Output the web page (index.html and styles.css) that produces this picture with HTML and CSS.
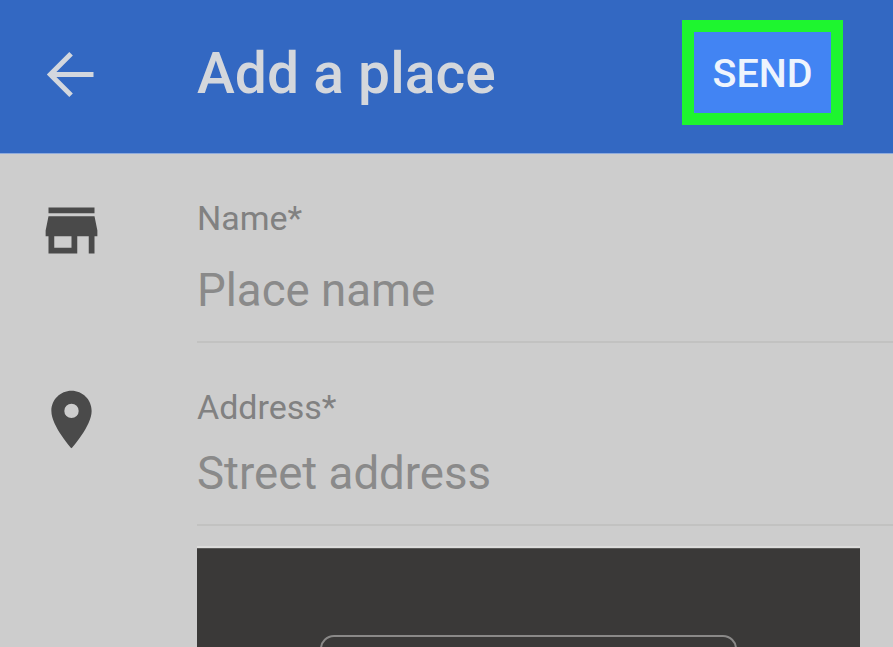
FILE: index.html
```html
<!DOCTYPE html>
<html lang="en">
<head>
<meta charset="utf-8">
<title>Add a place</title>
<link rel="stylesheet" href="styles.css">
</head>
<body>
<div class="page">
  <header class="appbar">
    <div class="appbar-left">
      <svg class="icon icon-back" viewBox="0 0 24 24"><path d="M20 12H5M12.200 4.800L5 12l7.200 7.200"/></svg>
    </div>
    <h1 class="title">Add a place</h1>
    <div class="send-frame"><button class="send">SEND</button></div>
  </header>
  <main class="form">
    <section class="row row-name">
      <div class="row-icon">
        <svg class="icon icon-dark" viewBox="0 0 24 24"><path d="M20 4H4v2h16V4zm1 10v-2l-1-5H4l-1 5v2h1v6h10v-6h4v6h2v-6h1zm-9 4H6v-4h6v4z"/></svg>
      </div>
      <div class="field">
        <div class="label">Name*</div>
        <div class="placeholder">Place name</div>
      </div>
    </section>
    <section class="row row-address">
      <div class="row-icon">
        <svg class="icon icon-dark" viewBox="0 0 24 24"><path d="M12 2C8.13 2 5 5.13 5 9c0 5.25 7 13 7 13s7-7.75 7-13c0-3.87-3.13-7-7-7zm0 9.5a2.5 2.5 0 0 1 0-5 2.5 2.5 0 0 1 0 5z"/></svg>
      </div>
      <div class="field">
        <div class="label">Address*</div>
        <div class="placeholder">Street address</div>
      </div>
    </section>
    <div class="map">
      <div class="map-button"></div>
    </div>
  </main>
</div>
</body>
</html>
```
FILE: styles.css
```css
* { box-sizing: border-box; }
html, body { margin: 0; padding: 0; }
body { font-family: Roboto, "Liberation Sans", sans-serif; background: #cdcdcd; }
.page { width: 893px; height: 647px; overflow: hidden; display: flex; flex-direction: column; }
.appbar {
  height: 154px; flex: none; background: #3368c2;
  border-bottom: 1px solid #8fabdc;
  padding-bottom: 5px;
  display: flex; align-items: center;
}
.appbar-left { width: 197px; padding-left: 36px; display: flex; }
.icon { width: 69px; height: 69px; display: block; }
.icon-back { fill: none; stroke: #d3d7de; stroke-width: 1.75; }
.icon-dark { fill: #4a4a4a; }
.title { margin: 0; flex: 1; font-size: 57px; font-weight: 500; color: #d4d7dc; line-height: 60px; }
.send-frame { width: 161px; height: 105px; margin-right: 50px; align-self: flex-start; margin-top: 20px; padding-top: 3px; border: 12px solid #1ef52f; background: #4284f3; display: flex; align-items: center; justify-content: center; }
.send { border: 0; padding: 0; background: none; font-family: inherit; font-size: 39.5px; font-weight: 500; color: #eef4fd; line-height: 42px; }
.form { flex: 1; display: flex; flex-direction: column; }
.row { display: grid; grid-template-columns: 197px 1fr; }
.row-icon { padding-left: 36.500px; }
.row-name { height: 189px; }
.row-name .row-icon { padding-top: 42px; }
.row-name .field { padding-top: 46px; }
.row-address { height: 183px; }
.row-address .row-icon { padding-top: 42px; }
.row-address .field { padding-top: 46px; }
.field { border-bottom: 2px solid #c2c2c1; }
.label { font-size: 34px; line-height: 36px; color: #818181; }
.placeholder { font-size: 45.6px; line-height: 50px; color: #8a8a8a; }
.row-name .placeholder { margin-top: 30px; }
.row-address .placeholder { margin-top: 24px; }
.map { margin: 22px 33px 0 197px; flex: 1; background: #3a3938; border-top: 1px solid #5b5a59; box-shadow: 0 -2px 0 #dcdcdb; padding: 86px 123px 0; }
.map-button { height: 60px; border: 2px solid #8a8988; border-radius: 14px; }
```
